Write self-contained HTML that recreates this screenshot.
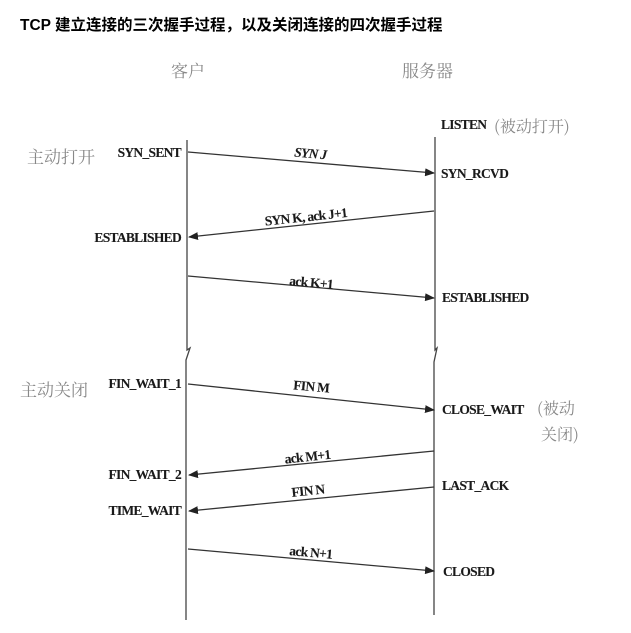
<!DOCTYPE html>
<html><head><meta charset="utf-8"><style>
body{margin:0;background:#fff;width:631px;height:633px;overflow:hidden}
svg{display:block}
.t{font-family:"Liberation Serif","Noto Serif CJK SC",serif;font-size:13.5px;fill:#1a1a1a;letter-spacing:-0.7px;font-weight:bold;stroke:#1a1a1a;stroke-width:0.1}
.c{font-family:"Noto Serif CJK SC","Noto Sans CJK SC",serif;fill:#888;font-size:17px}
.i{font-style:italic}
.e{text-anchor:end}
</style></head><body>
<svg width="631" height="633" viewBox="0 0 631 633">
<defs><marker id="a" markerWidth="10" markerHeight="8" refX="9" refY="4" orient="auto" markerUnits="userSpaceOnUse"><path d="M0,0 L10,4 L0,8 Z" fill="#222"/></marker></defs>
<text x="20" y="30" style="font-family:'Liberation Sans','Noto Sans CJK SC',sans-serif;font-weight:bold;font-size:15.5px;fill:#000">TCP 建立连接的三次握手过程，以及关闭连接的四次握手过程</text>
<text class="c" x="171" y="77">客户</text>
<text class="c" x="402" y="77">服务器</text>
<g stroke="#444" stroke-width="1.3" fill="none">
<path d="M187,140 V350 L190,348 L186,360 V620"/>
<path d="M435,137 V350 L437,348 L434,362 V615"/>
</g>
<g stroke="#333" stroke-width="1.3" marker-end="url(#a)">
<line x1="188" y1="152" x2="434" y2="173"/>
<line x1="434" y1="211" x2="189" y2="237"/>
<line x1="188" y1="276" x2="434" y2="298"/>
<line x1="188" y1="384" x2="434" y2="410"/>
<line x1="434" y1="451" x2="189" y2="475"/>
<line x1="434" y1="487" x2="189" y2="511"/>
<line x1="188" y1="549" x2="434" y2="571"/>
</g>
<text class="t" x="441" y="129">LISTEN</text><text class="c" x="494" y="132" style="font-size:16px">(被动打开)</text>
<text class="c" x="27" y="163">主动打开</text><text class="t e" x="181" y="157">SYN_SENT</text>
<text class="t i" x="294" y="157" transform="rotate(5 300 157)">SYN J</text>
<text class="t" x="441" y="178">SYN_RCVD</text>
<text class="t" x="265" y="222" transform="rotate(-6 300 222)">SYN K, ack J+1</text>
<text class="t e" x="181" y="242">ESTABLISHED</text>
<text class="t" x="289" y="286" transform="rotate(5 300 286)">ack K+1</text>
<text class="t" x="442" y="302">ESTABLISHED</text>
<text class="c" x="20" y="396">主动关闭</text><text class="t e" x="181" y="388">FIN_WAIT_1</text>
<text class="t" x="293" y="390" transform="rotate(5 300 390)">FIN M</text>
<text class="t" x="442" y="414">CLOSE_WAIT</text><text class="c" x="537" y="414" style="font-size:16px">(被动</text><text class="c" x="541" y="440" style="font-size:16px">关闭)</text>
<text class="t" x="285" y="462" transform="rotate(-6 300 462)">ack M+1</text>
<text class="t e" x="181" y="479">FIN_WAIT_2</text>
<text class="t" x="442" y="490">LAST_ACK</text>
<text class="t" x="292" y="496" transform="rotate(-6 300 496)">FIN N</text>
<text class="t e" x="181" y="515">TIME_WAIT</text>
<text class="t" x="289" y="556" transform="rotate(5 300 556)">ack N+1</text>
<text class="t" x="443" y="576">CLOSED</text>
</svg>
</body></html>
